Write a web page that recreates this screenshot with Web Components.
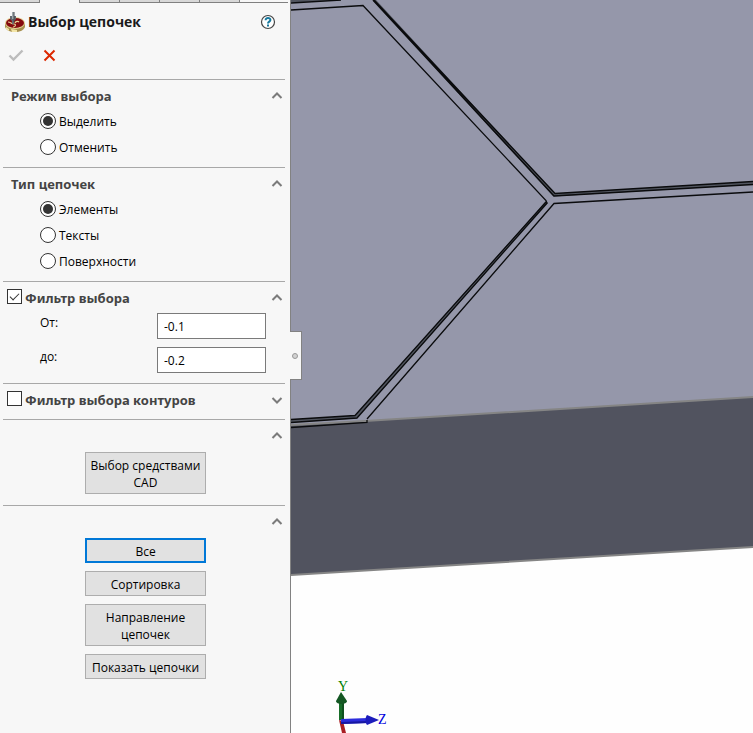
<!DOCTYPE html>
<html lang="ru">
<head>
<meta charset="utf-8">
<meta name="viewport" content="width=device-width, initial-scale=1">
<title>Выбор цепочек</title>
<style>
	body {
		margin: 0;
		font: 12px/17px "Open Sans", "Noto Sans", sans-serif;
		color: #000;
		background: #fff;
	}
</style>
</head>
<body>
<cad-workspace>
	<property-panel slot="panel" heading="Выбор цепочек">
		<panel-section heading="Режим выбора">
			<radio-group name="mode" label="Режим выбора" options="Выделить|Отменить"></radio-group>
		</panel-section>
		<panel-section heading="Тип цепочек">
			<radio-group name="type" label="Тип цепочек" options="Элементы|Тексты|Поверхности"></radio-group>
		</panel-section>
		<panel-section heading="Фильтр выбора" toggle="on">
			<number-field label="От:" value="-0.1"></number-field>
			<number-field label="до:" value="-0.2"></number-field>
		</panel-section>
		<panel-section heading="Фильтр выбора контуров" toggle="off" collapsed></panel-section>
		<panel-section>
			<button-stack>
				<push-button>Выбор средствами CAD</push-button>
			</button-stack>
		</panel-section>
		<panel-section>
			<button-stack>
				<push-button primary>Все</push-button>
				<push-button>Сортировка</push-button>
				<push-button>Направление цепочек</push-button>
				<push-button>Показать цепочки</push-button>
			</button-stack>
		</panel-section>
	</property-panel>
	<model-view></model-view>
</cad-workspace>

<script>
class CadWorkspace extends HTMLElement {
	constructor() {
		super();
		this.attachShadow({ mode: "open" }).innerHTML = `
			<style>
				:host {
					display: flex;
					min-height: 100vh;
				}
				aside {
					position: relative;
					flex: none;
					z-index: 1;
					border-right: 1px solid #828282;
					background: #f7f7f7;
				}
				main {
					flex: 1;
					min-width: 0;
					display: flex;
				}
				.handle {
					position: absolute;
					top: 331px;
					right: -12px;
					box-sizing: border-box;
					width: 12px;
					height: 49px;
					padding: 0;
					border: 1px solid #828282;
					border-left: 0;
					background: #f7f7f7;
					display: grid;
					place-items: center start;
				}
				.handle::before {
					content: "";
					width: 4px;
					height: 4px;
					margin-left: 2px;
					border: 1px solid #999;
					border-radius: 50%;
					background: #d2d2d2;
				}
			</style>
			<aside>
				<slot name="panel"></slot>
				<button class="handle" aria-label="Свернуть панель"></button>
			</aside>
			<main><slot></slot></main>
		`;
	}
}

class PropertyPanel extends HTMLElement {
	constructor() {
		super();
		this.attachShadow({ mode: "open" }).innerHTML = `
			<style>
				:host {
					display: block;
					width: 290px;
				}
				.tabs {
					display: grid;
					grid-template-columns: repeat(6, 40px) 1fr;
					height: 3px;
					padding-right: 2px;
				}
				.tabs i {
					box-sizing: border-box;
					border: solid #808080;
					border-width: 0 1px 1px 0;
					background: #d8d8d8;
				}
				.tabs i.active {
					border-bottom: 0;
					background: none;
				}
				.tabs i.rest {
					border-right: 0;
					background: none;
				}
				header {
					display: flex;
					align-items: center;
					gap: 3px;
					height: 38px;
					padding: 0 14px 0 5px;
				}
				h1 {
					flex: 1;
					margin: 0;
					font-size: 14px;
					line-height: 20px;
					color: #1a1a1a;
				}
				button {
					display: block;
					padding: 0;
					border: 0;
					background: none;
				}
				svg { display: block; }
				.actions {
					display: flex;
					gap: 18px;
					padding: 6px 8px 16px;
				}
			</style>
			<div class="tabs"><i></i><i class="active"></i><i></i><i></i><i></i><i></i><i class="rest"></i></div>
			<header>
				<svg width="20" height="20" viewBox="0 0 20 20">
					<path d="M0 11v4c1 3 5 5 10 5s9-2 10-5v-4z" fill="#a8904f"/>
					<path d="M1 15l3 2v2l-3-2zM6 17l6 1v2H7z" fill="#f3e5a7"/>
					<ellipse cx="10" cy="11" rx="10" ry="6" fill="#e6d596"/>
					<ellipse cx="10" cy="11" rx="9" ry="5" fill="#85090e"/>
					<path d="M3 10c3 0 3 2 6 2 2 0 2 3-1 3M10 11c1-2 3-2 4-1" fill="none" stroke="#e6d596" stroke-width="1.2"/>
					<path d="M5 4h6v3l-2 2v2l-1 2-1-2V9L5 7z" fill="#626970"/>
					<path d="M7 0h2v7H7z" fill="#a0a7ac"/>
					<path d="M9 0v10" stroke="#454a50"/>
				</svg>
				<h1></h1>
				<button aria-label="Справка">
					<svg width="16" height="16" viewBox="0 0 16 16" fill="none">
						<circle cx="8" cy="8" r="6.5" fill="#fff" stroke="#444" stroke-width="1.2"/>
						<path d="M5.6 6.2c0-3.2 4.900-2.900 4.800-.2 0 1.600-2.400 1.700-2.400 3.500" stroke="#16789d" stroke-width="2"/>
						<path d="M7 10.600h2v2H7z" fill="#16789d"/>
					</svg>
				</button>
			</header>
			<div class="actions">
				<button aria-label="ОК" disabled>
					<svg width="16" height="16" viewBox="0 0 16 16"><path d="M1.5 8.5l4 4 9-9" fill="none" stroke="#bcbcbc" stroke-width="2.4"/></svg>
				</button>
				<button aria-label="Отмена">
					<svg width="16" height="16" viewBox="0 0 16 16"><path d="M2.5 3.5l10 10m0-10l-10 10" fill="none" stroke="#dc2800" stroke-width="2"/></svg>
				</button>
			</div>
			<slot></slot>
		`;
		this.shadowRoot.querySelector("h1").textContent = this.getAttribute("heading");
	}
}

class PanelSection extends HTMLElement {
	constructor() {
		super();
		const heading = this.getAttribute("heading") || "";
		const toggle = this.getAttribute("toggle");
		const collapsed = this.hasAttribute("collapsed");
		const title = toggle
			? `<label><input type="checkbox"${toggle === "on" ? " checked" : ""}><span>${heading}</span></label>`
			: `<span class="plain">${heading}</span>`;
		this.attachShadow({ mode: "open" }).innerHTML = `
			<style>
				:host {
					display: block;
					margin: 0 5px 0 3px;
					padding: 4px 0 7px;
					border-top: 1px solid #a8a8a8;
				}
				h2 {
					display: flex;
					align-items: center;
					justify-content: space-between;
					height: 24px;
					margin: 0;
					padding: 0 2px 0 4px;
					font: bold 13px/18px "Noto Sans", sans-serif;
					color: #444;
				}
				.plain { padding-left: 4px; }
				label {
					display: flex;
					align-items: center;
					gap: 3px;
					padding-bottom: 3px;
				}
				label span { padding-top: 2px; }
				input {
					appearance: none;
					box-sizing: border-box;
					width: 15px;
					height: 15px;
					margin: 0;
					border: 1px solid #333;
					background: #fff;
					display: grid;
					place-items: center;
				}
				input:checked::before {
					content: "";
					box-sizing: border-box;
					width: 9px;
					height: 5px;
					margin-bottom: 3px;
					border: solid #333;
					border-width: 0 0 1px 1px;
					transform: rotate(-45deg);
				}
				button {
					padding: 0;
					border: 0;
					background: none;
				}
				svg { display: block; }
				.down svg { transform: scaleY(-1); }
			</style>
			<h2>
				${title}
				<button class="${collapsed ? "down" : "up"}" aria-label="${collapsed ? "Развернуть" : "Свернуть"}">
					<svg width="12" height="12" viewBox="0 0 12 12"><path d="M1.5 8L6 3.500 10.500 8" fill="none" stroke="#7b7b7b" stroke-width="2"/></svg>
				</button>
			</h2>
			<slot></slot>
		`;
	}
}

class RadioGroup extends HTMLElement {
	constructor() {
		super();
		const name = this.getAttribute("name");
		const rows = this.getAttribute("options").split("|").map((text, i) => `
			<label><input type="radio" name="${name}"${i ? "" : " checked"}><span>${text}</span></label>
		`).join("");
		this.attachShadow({ mode: "open" }).innerHTML = `
			<style>
				:host {
					display: block;
					padding-left: 37px;
				}
				label {
					display: flex;
					align-items: center;
					gap: 3px;
					height: 26px;
				}
				input {
					appearance: none;
					box-sizing: border-box;
					width: 16px;
					height: 16px;
					margin: 0;
					border: 1px solid #333;
					border-radius: 50%;
					background: #fff;
					display: grid;
					place-items: center;
				}
				input:checked::before {
					content: "";
					width: 10px;
					height: 10px;
					border-radius: 50%;
					background: #333;
				}
			</style>
			<div role="radiogroup" aria-label="${this.getAttribute("label")}">${rows}</div>
		`;
	}
}

class NumberField extends HTMLElement {
	constructor() {
		super();
		this.attachShadow({ mode: "open" }).innerHTML = `
			<style>
				:host {
					display: flex;
					justify-content: space-between;
					margin: 3px 19px 8px 37px;
				}
				:host(:last-of-type) { margin-bottom: 3px; }
				:host(:not(:first-of-type)) { margin-top: 0; }
				label { padding-top: 1px; }
				input {
					box-sizing: border-box;
					width: 109px;
					height: 26px;
					padding: 0 6px;
					border: 1px solid #7a7a7a;
					background: #fff;
					color: inherit;
					font: inherit;
				}
			</style>
			<label for="value">${this.getAttribute("label")}</label>
			<input id="value" type="text" inputmode="decimal" value="${this.getAttribute("value")}">
		`;
	}
}

class ButtonStack extends HTMLElement {
	constructor() {
		super();
		this.attachShadow({ mode: "open" }).innerHTML = `
			<style>
				:host {
					display: flex;
					flex-direction: column;
					align-items: center;
					gap: 8px;
					padding: 4px 0 4px 3px;
				}
			</style>
			<slot></slot>
		`;
	}
}

class PushButton extends HTMLElement {
	constructor() {
		super();
		this.attachShadow({ mode: "open" }).innerHTML = `
			<style>
				:host { display: block; }
				button {
					display: block;
					box-sizing: border-box;
					width: 121px;
					padding: 4px 0 2px;
					border: 1px solid #adadad;
					background: #e1e1e1;
					color: inherit;
					font: inherit;
				}
				:host([primary]) button {
					padding: 3px 0 1px;
					border: 2px solid #0078d7;
				}
			</style>
			<button><slot></slot></button>
		`;
	}
}

class ModelView extends HTMLElement {
	constructor() {
		super();
		this.attachShadow({ mode: "open" }).innerHTML = `
			<style>
				:host {
					position: relative;
					flex: 1;
					min-width: 0;
					overflow: hidden;
					background: #fefefe;
				}
				svg {
					position: absolute;
					inset: 0;
					width: 100%;
					height: 100%;
				}
				text { font: 14px/14px "Liberation Serif", serif; }
			</style>
			<svg viewBox="291 0 462 733" preserveAspectRatio="xMinYMin slice" role="img" aria-label="Модель">
				<!-- top and front faces of the plate -->
				<path d="M291 0H753V397L291 425z" fill="#9597aa"/>
				<path d="M291 425L753 397V547L291 575z" fill="#51535f"/>
				<path d="M291 425L365 421 753 397M291 575L753 547" fill="none" stroke="#858585" stroke-width="2"/>

				<!-- groove walls -->
				<g fill="none" stroke="#51555f" stroke-width="3">
					<path d="M291 1L340-1M374 0L554 195 753 183"/>
					<path d="M547 202L356 417 291 421"/>
				</g>
				<g fill="none" stroke="#0a0b0d" stroke-width="1.3">
					<path d="M291 3L341 0M291 10L363 5.5 546 200.5 547 203 357 418 291 422.5"/>
					<path d="M374 0L555 193.5 753 181.500M373 0L554 196 753 184.500" stroke-width="1.500"/>
					<path d="M546 202L355 415.500 291 419.500"/>
					<path d="M753 192L554 203.500 367 419M367 420v2.500L291 427.500"/>
				</g>

				<!-- orientation triad -->
				<path d="M339 720l4 1 3 12h-4z" fill="#a91f24"/>
				<path d="M339 702h5v18h-5z" fill="#176d28"/>
				<path d="M342 702h2v18h-2z" fill="#0f501e"/>
				<path d="M341 692l6 9c0 4-11 4-11 0z" fill="#145723"/>
				<path d="M341 719l27-1v5l-27 1z" fill="#2c2cdc"/>
				<path d="M341 722l27-1v2l-27 1z" fill="#1717a0"/>
				<path d="M367 715l12 5-12 5c-2-2-2-8 0-10z" fill="#1c1cbb"/>
				<text x="338" y="691" fill="#008000">Y</text>
				<text x="378" y="724" fill="#0000dc">Z</text>
			</svg>
		`;
	}
}

customElements.define("cad-workspace", CadWorkspace);
customElements.define("property-panel", PropertyPanel);
customElements.define("panel-section", PanelSection);
customElements.define("radio-group", RadioGroup);
customElements.define("number-field", NumberField);
customElements.define("button-stack", ButtonStack);
customElements.define("push-button", PushButton);
customElements.define("model-view", ModelView);
</script>
</body>
</html>
